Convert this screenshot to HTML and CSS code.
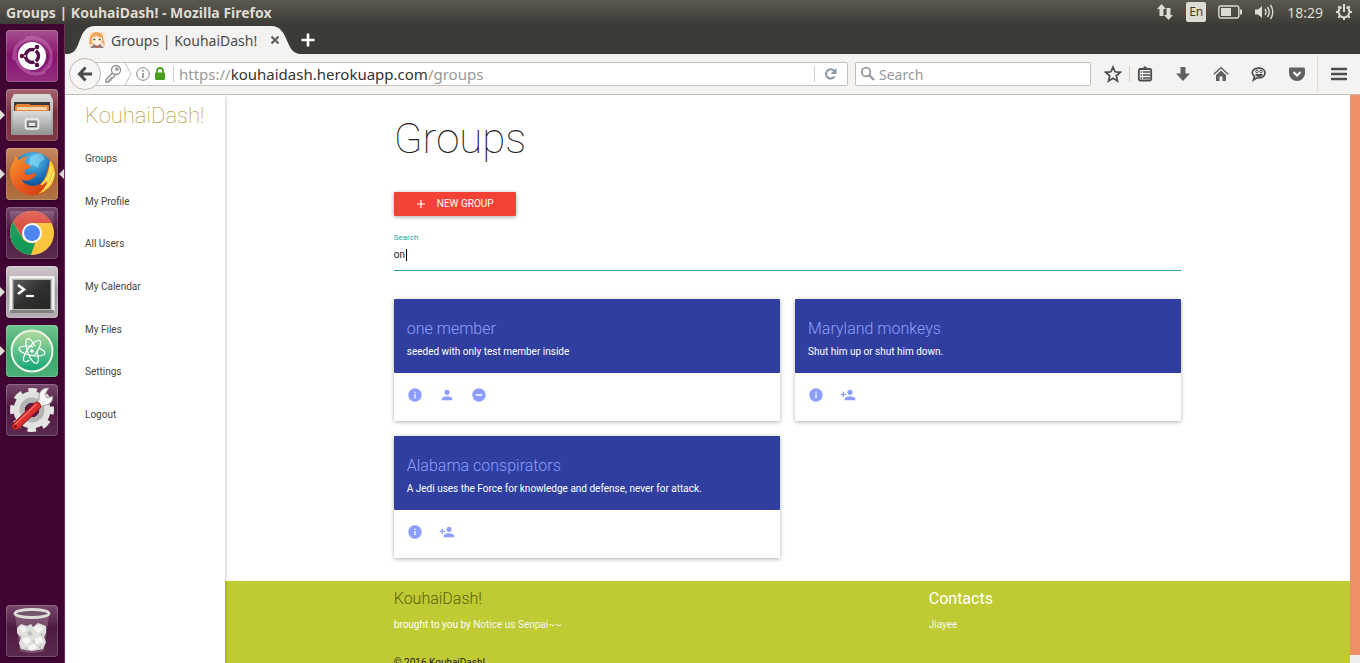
FILE: index.html
```html
<!DOCTYPE html>
<html lang="en">
<head>
<meta charset="utf-8">
<title>Groups | KouhaiDash!</title>
<link rel="stylesheet" href="styles.css">
</head>
<body>
<svg class="defs" aria-hidden="true">
  <defs>
    <linearGradient id="gloss" x1="0" y1="0" x2="0" y2="1"><stop offset="0" stop-color="#fff" stop-opacity=".3"/><stop offset=".55" stop-color="#fff" stop-opacity=".05"/><stop offset="1" stop-color="#fff" stop-opacity=".1"/></linearGradient>
    <linearGradient id="steel" x1="0" y1="0" x2="0" y2="1"><stop offset="0" stop-color="#dcdcda"/><stop offset="1" stop-color="#929290"/></linearGradient>
    <radialGradient id="globe" cx=".5" cy=".2" r=".8"><stop offset="0" stop-color="#5cc6ee"/><stop offset=".6" stop-color="#1667ad"/><stop offset="1" stop-color="#0d2c66"/></radialGradient>
    <linearGradient id="fox" x1="0" y1="0" x2="1" y2="1"><stop offset="0" stop-color="#f79a2c"/><stop offset=".5" stop-color="#e9581e"/><stop offset="1" stop-color="#c6340f"/></linearGradient>
    <linearGradient id="screen" x1="0" y1="0" x2="1" y2="1"><stop offset="0" stop-color="#5a5a58"/><stop offset=".5" stop-color="#30302e"/><stop offset="1" stop-color="#262624"/></linearGradient>
    <linearGradient id="mint" x1="0" y1="0" x2="0" y2="1"><stop offset="0" stop-color="#b4dc9c"/><stop offset="1" stop-color="#0ea678"/></linearGradient>
  </defs>
  <symbol id="info" viewBox="0 0 24 24"><path d="M12 2C6.480 2 2 6.480 2 12s4.480 10 10 10 10-4.480 10-10S17.520 2 12 2zm1 15h-2v-6h2v6zm0-8h-2V7h2v2z"/></symbol>
  <symbol id="person" viewBox="0 0 24 24"><path d="M12 12c2.210 0 4-1.790 4-4s-1.790-4-4-4-4 1.790-4 4 1.790 4 4 4zm0 2c-2.670 0-8 1.340-8 4v2h16v-2c0-2.660-5.330-4-8-4z"/></symbol>
  <symbol id="remove" viewBox="0 0 24 24"><path d="M12 2C6.480 2 2 6.480 2 12s4.480 10 10 10 10-4.480 10-10S17.520 2 12 2zm5 11H7v-2h10v2z"/></symbol>
  <symbol id="person-add" viewBox="0 0 24 24"><path d="M15 12c2.210 0 4-1.790 4-4s-1.790-4-4-4-4 1.790-4 4 1.790 4 4 4zm-9-2V7H4v3H1v2h3v3h2v-3h3v-2H6zm9 4c-2.670 0-8 1.340-8 4v2h16v-2c0-2.660-5.330-4-8-4z"/></symbol>
</svg>

<header class="panel">
  <span class="panel-title">Groups | KouhaiDash! - Mozilla Firefox</span>
  <div class="indicators">
    <svg width="18" height="18" viewBox="0 0 18 18" fill="#dfdbd2"><path d="M5.500 1L10 6H7.500v7h-4V6H1zM12.500 17L8 12h2.500V5h4v7H17z"/></svg>
    <span class="lang">En</span>
    <svg width="24" height="14" viewBox="0 0 24 14"><rect x=".8" y="1" width="20" height="12" rx="2" fill="none" stroke="#dfdbd2" stroke-width="1.400"/><path d="M3 3h10v8H3zM22 4.500h2v5h-2z" fill="#dfdbd2"/></svg>
    <svg width="21" height="16" viewBox="0 0 21 16"><path d="M1 5.500h3L8 2v12l-4-3.500H1z" fill="#dfdbd2"/><path d="M11 5q2 3 0 6M13.500 3q3.500 5 0 10M16.500 1q4.500 7 0 14" fill="none" stroke="#dfdbd2" stroke-width="1.400"/></svg>
    <span class="clock">18:29</span>
    <svg width="18" height="18" viewBox="0 0 18 18" fill="none" stroke="#dfdbd2" stroke-width="2"><path d="M6.500 4a5.500 5.500 0 1 0 5 0M9 1v8"/><path d="M1 9h2.500M14.500 9H17M3.300 3.300L5 5M14.700 3.300L13 5M3.300 14.700L5 13M14.700 14.700L13 13M9 14.500V17"/></svg>
  </div>
</header>

<div class="desktop">
  <nav class="launcher" aria-label="Launcher">
    <button class="tile dash" aria-label="Dash"><svg viewBox="0 0 52 52"><path d="M8 30C6 12 24 3 39 13c10 8 7 22-2 28M10 16c-4 18 11 33 29 26M20 8c18-5 32 14 22 30" fill="none" stroke="#d68aca" stroke-width="3" opacity=".4"/><circle cx="26" cy="26" r="14" fill="#fff"/><circle cx="26" cy="26" r="6.500" fill="none" stroke="#561047" stroke-width="3.500"/><path d="M15 26h5M31 18l-3 4M31 34l-3-4" stroke="#fff" stroke-width="1.500"/><g fill="#561047"><circle cx="16" cy="26" r="2.300"/><circle cx="31" cy="17" r="2.300"/><circle cx="31" cy="35" r="2.300"/></g></svg></button>
    <button class="tile files running" aria-label="Files"><svg viewBox="0 0 52 52"><path d="M8 5h36l3 6v35H5V11z" fill="url(#steel)"/><path d="M8 13h36v13H8z" fill="#3c3734"/><path d="M9 17l2-2h12l2 1h18v6H9z" fill="#e7833a"/><path d="M11 18h30v3H11z" fill="#f8d6ac"/><path d="M7 22h38v24H7z" fill="url(#steel)"/><rect x="19.500" y="30" width="13" height="10" rx="2" fill="#b5b5b3" stroke="#f4f4f4" stroke-width="1.500"/><rect x="22" y="33" width="8" height="4.500" fill="#e4e4e4" stroke="#444"/></svg></button>
    <button class="tile firefox running active" aria-label="Firefox"><svg viewBox="0 0 52 52"><circle cx="27" cy="25" r="21" fill="url(#globe)"/><path d="M24 9q6-5 12-3l3 5-5 3-2 6-5-3-4 1z" fill="#8fdcf6" opacity=".55"/><path d="M44 12q7 9 4 19C45 43 33 49 22 47 10 44 4 35 4 25q0-7 4-12l1-5 4 4q5-4 9-3-4 2-3 6l6 3q-2 3-6 4-1 3 2 5l9-2q0 5-6 7-5 2-9-1 4 7 12 7 9-1 12-8 3-8 5-18z" fill="url(#fox)"/><path d="M44 12q7 9 4 19-3 11-16 15 9-7 9-13-4 4-7 4 9-9 10-25z" fill="#f9cf35"/><path d="M45 18q0 12-9 19M48 24q-2 11-10 17" stroke="#fff3a0" fill="none"/></svg></button>
    <button class="tile glass" aria-label="Chrome"><svg viewBox="0 0 52 52"><circle cx="26" cy="26" r="22" fill="#f9c63e"/><path d="M7 15A22 22 0 0 1 46 16H26L17 31z" fill="#dc4a3e"/><path d="M7 15l10 17q4 5 12 4l-4 12A22 22 0 0 1 7 15z" fill="#149959"/><circle cx="26" cy="26" r="10" fill="#fff"/><circle cx="26" cy="26" r="8" fill="#4b86f0"/><path d="M4 4h44v14Q25 21 4 32z" fill="url(#gloss)" opacity=".6"/></svg></button>
    <button class="tile terminal running" aria-label="Terminal"><svg viewBox="0 0 52 52"><rect x="3.500" y="10" width="45" height="37" rx="1" fill="#f3f3f1"/><rect x="4" y="44" width="44" height="3" fill="#82827f"/><rect x="6" y="12.500" width="40" height="31.500" fill="#b9b9b7"/><rect x="7.500" y="14" width="37" height="29" fill="url(#screen)"/><path d="M12 19l6 4.500-6 4.500" fill="none" stroke="#fff" stroke-width="2.600"/><path d="M20 30h8" stroke="#fff" stroke-width="2.200"/></svg></button>
    <button class="tile atom running" aria-label="Atom"><svg viewBox="0 0 52 52" fill="none"><circle cx="26" cy="26" r="20.500" fill="url(#mint)" stroke="#f0f4e8" stroke-width="2"/><g stroke="#fff" stroke-width="1.200"><ellipse cx="26" cy="26" rx="13" ry="4.500" transform="rotate(10 26 26)" stroke-dasharray="44 6"/><ellipse cx="26" cy="26" rx="13" ry="4.500" transform="rotate(70 26 26)" stroke-dasharray="40 6"/><ellipse cx="26" cy="26" rx="13" ry="4.500" transform="rotate(127 26 26)" stroke-dasharray="46 6"/></g><circle cx="26" cy="26" r="1.800" fill="#fff"/></svg></button>
    <button class="tile glass" aria-label="System Settings"><svg viewBox="0 0 52 52"><circle cx="26" cy="26" r="19.500" fill="none" stroke="#e6e6e4" stroke-width="5" stroke-dasharray="8.500 6.820" stroke-dashoffset="4.250"/><circle cx="26" cy="26" r="13" fill="none" stroke="#e2e2e0" stroke-width="11"/><circle cx="26" cy="26" r="10" fill="none" stroke="#b4b4b2" stroke-width="5"/><path d="M30 20l3-5q-1-8 6-11l4 0-4 6 2 4 6-2q0 8-7 9l-4 1-3 3z" fill="#f4f4f2" stroke="#888" stroke-width=".8"/><path d="M31 22L10 42" stroke="#9d1616" stroke-width="8" stroke-linecap="round"/><path d="M31 22L10 42" stroke="#dd302c" stroke-width="6.500" stroke-linecap="round"/><path d="M30 20.500L9.500 40" stroke="#f2706a" stroke-width="1.500" stroke-linecap="round"/><circle cx="9.500" cy="42.500" r="1.500" fill="#5f1010"/></svg></button>
    <button class="tile glass trash" aria-label="Trash"><svg viewBox="0 0 52 52"><path d="M9 10l5 36q12 4 24 0l5-36z" fill="#9a7990" opacity=".5"/><path d="M11 23l4-4 6 2 4-2 2 3 5-4 8 3 0 7-2 4 2 5-3 7-11 2-11-2-2-6 2-5-4-5z" fill="#dfe0dd"/><g fill="#f6f6f4"><path d="M13 22l5-1 3 4-4 3zM27 23l6-3 5 4-6 4zM16 34l6-2 3 4-5 4zM29 33l6-1 2 5-7 2zM22 41l6-2 3 4-7 2z"/></g><g fill="#bcbfba"><path d="M21 27l4-1 2 4-4 1zM13 29l3 2-1 3zM34 29l4-1-2 4zM25 36l3-1 1 3zM18 42l3 1 0 3zM32 42l3-2 0 4z"/></g><ellipse cx="26" cy="8.500" rx="17" ry="4" fill="#73566b" stroke="#deded9" stroke-width="2.800"/></svg></button>
  </nav>

  <div class="browser">
    <div class="tabstrip">
      <div class="tab">
        <svg class="tab-shape" width="234" height="28" viewBox="0 0 234 28"><path d="M0 28C16 28 9 0 28 0H204C223 0 217 28 234 28z" fill="#f4f3f2"/></svg>
        <svg class="favicon" width="16" height="16" viewBox="0 0 16 16"><path d="M0 0h16v16H0z" fill="#fbe8d0"/><path d="M0 12L1 5q1-4 6-5 7 0 7 6l2 7-3-2-9 1z" fill="#f0a65c"/><path d="M3 6l4-2 6 2v4l-5 4-5-4z" fill="#fff1df"/><path d="M4 7.500h2.500M9.500 7.500H12" stroke="#687048" stroke-width="1.500"/><path d="M1 16l4-4 3 2 3-2 4 4z" fill="#8f8085"/><path d="M5 13l3 3 3-3-3 1z" fill="#d4563e"/></svg>
        <span class="tab-title">Groups | KouhaiDash!</span>
        <button class="icon-btn" aria-label="Close tab"><svg width="10" height="10" viewBox="0 0 10 10" stroke="#62615e" stroke-width="2.200"><path d="M1.500 1.500l7 7M8.500 1.500l-7 7"/></svg></button>
      </div>
      <button class="icon-btn" aria-label="New tab"><svg width="14" height="14" viewBox="0 0 14 14" stroke="#fff" stroke-width="2.600"><path d="M7 .5v13M.5 7h13"/></svg></button>
    </div>

    <div class="toolbar">
      <button class="back" aria-label="Back"><svg width="16" height="16" viewBox="0 0 16 16" fill="none" stroke="#4c4c4c" stroke-width="3"><path d="M8.500 1.500L2.500 8l6 6.500M3 8h12"/></svg></button>
      <div class="urlbar">
        <svg width="28" height="22" viewBox="0 0 28 22" fill="none" stroke="#8b8b8b" stroke-width="1.300"><circle cx="12" cy="7" r="4.500"/><circle cx="13" cy="6" r="1.200"/><path d="M8.500 10L2 16.500V19h3v-2h2v-2h2l2-3"/><path d="M21 0l6 11-6 11" stroke="#c3c0bc" stroke-width="1"/></svg>
        <svg width="14" height="14" viewBox="0 0 14 14" fill="none" stroke="#858585"><circle cx="7" cy="7" r="6.300"/><path d="M7 6v5M7 3v1.700" stroke-width="1.500"/></svg>
        <svg class="lock" width="12" height="14" viewBox="0 0 12 14"><rect x="1" y="5.500" width="10" height="7.500" rx="1" fill="#47a01e"/><path d="M3 6V4q0-3 3-3t3 3v2" fill="none" stroke="#47a01e" stroke-width="1.800"/></svg>
        <div class="url" role="textbox" aria-label="Address" contenteditable="true" spellcheck="false">https://<span class="host">kouhaidash.herokuapp.com</span>/groups</div>
        <button class="reload" aria-label="Reload"><svg width="14" height="14" viewBox="0 0 14 14"><path d="M10.500 9.500A4.600 4.600 0 1 1 10 3.800" fill="none" stroke="#8796a5" stroke-width="2"/><path d="M12.500 1v6h-6z" fill="#8796a5"/></svg></button>
      </div>
      <label class="websearch">
        <svg width="16" height="16" viewBox="0 0 16 16" fill="none" stroke="#999"><circle cx="6" cy="6" r="4.300" stroke-width="1.800"/><path d="M9 9l5 5" stroke-width="2.400"/></svg>
        <input type="text" placeholder="Search" aria-label="Web search">
      </label>
      <div class="tools">
        <button class="icon-btn star" aria-label="Bookmark"><svg width="18" height="18" viewBox="0 0 18 18"><path d="M9 2l2.100 4.800 5.200.5-4 3.500 1.200 5.200L9 13.300 4.500 16l1.200-5.200-4-3.500 5.200-.5z" fill="none" stroke="#4c4c4c" stroke-width="1.700"/></svg></button>
        <button class="icon-btn" aria-label="Bookmarks menu"><svg width="16" height="16" viewBox="0 0 16 16"><path d="M5 3l3-3 3 3z" fill="#4c4c4c"/><rect x="1.800" y="3" width="12.400" height="11.500" rx="1.500" fill="none" stroke="#4c4c4c" stroke-width="1.800"/><path d="M3.500 6H5M6 6h7M3.500 9H5M6 9h7M3.500 12H5M6 12h7" stroke="#4c4c4c" stroke-width="1.300"/></svg></button>
        <button class="icon-btn" aria-label="Downloads"><svg width="16" height="16" viewBox="0 0 16 16"><path d="M5.500 1h5v6.500H15L8 15 1 7.500h4.500z" fill="#616161"/></svg></button>
        <button class="icon-btn" aria-label="Home"><svg width="16" height="16" viewBox="0 0 16 16" fill="#616161"><path d="M8 4.500l5 4.500v6H9.500v-4.500h-3V15H3V9z"/><path d="M.8 8.300L8 1.800l7.200 6.500" fill="none" stroke="#616161" stroke-width="1.500"/></svg></button>
        <button class="icon-btn" aria-label="Chat"><svg width="16" height="16" viewBox="0 0 16 16"><path d="M8 2.200c8 0 8 9.800 0 9.800H5.500L2.500 14l1-3.500C-1 6.500 2 2.200 8 2.200z" fill="#f4f3f2" stroke="#4c4c4c" stroke-width="1.700"/><path d="M4 8h8q-1 3-4 3T4 8z" fill="#4c4c4c"/><circle cx="6" cy="5.500" r="1.300" fill="none" stroke="#4c4c4c"/><circle cx="10" cy="5.500" r="1.300" fill="none" stroke="#4c4c4c"/></svg></button>
        <button class="icon-btn" aria-label="Pocket"><svg width="16" height="16" viewBox="0 0 16 16"><path d="M1.500 1.500h13q1.500 0 1.500 1V7a8 8 0 0 1-16 0V2.500q0-1 1.500-1z" fill="#616161"/><path d="M4.500 6L8 9.500 11.500 6" fill="none" stroke="#fff" stroke-width="2"/></svg></button>
        <button class="icon-btn menu" aria-label="Menu"><svg width="16" height="14" viewBox="0 0 16 14"><path d="M1 2h14M1 7h14M1 12h14" stroke="#4c4c4c" stroke-width="2.600" stroke-linecap="round"/></svg></button>
      </div>
    </div>

    <div class="page">
      <aside class="sidenav">
        <a class="brand" href="#">KouhaiDash!</a>
        <ul class="nav-list">
          <li><a href="#">Groups</a></li>
          <li><a href="#">My Profile</a></li>
          <li><a href="#">All Users</a></li>
          <li><a href="#">My Calendar</a></li>
          <li><a href="#">My Files</a></li>
          <li><a href="#">Settings</a></li>
          <li><a href="#">Logout</a></li>
        </ul>
      </aside>
      <div class="content">
        <main class="container">
          <h1>Groups</h1>
          <button class="new-group"><svg width="12" height="12" viewBox="0 0 24 24" fill="#fff"><path d="M20 13.200h-6.800V20h-2.400v-6.800H4v-2.400h6.800V4h2.400v6.800H20z"/></svg>NEW GROUP</button>
          <div class="field">
            <label for="group-search">Search</label>
            <input id="group-search" type="text" value="on">
          </div>
          <div class="cards">
            <article class="card">
              <div class="card-head"><h2>one member</h2><p>seeded with only test member inside</p></div>
              <div class="card-actions">
                <a href="#" aria-label="Info"><svg><use href="#info"/></svg></a>
                <a href="#" aria-label="Members"><svg><use href="#person"/></svg></a>
                <a href="#" aria-label="Leave"><svg><use href="#remove"/></svg></a>
              </div>
            </article>
            <article class="card">
              <div class="card-head"><h2>Maryland monkeys</h2><p>Shut him up or shut him down.</p></div>
              <div class="card-actions">
                <a href="#" aria-label="Info"><svg><use href="#info"/></svg></a>
                <a href="#" aria-label="Join"><svg><use href="#person-add"/></svg></a>
              </div>
            </article>
            <article class="card">
              <div class="card-head"><h2>Alabama conspirators</h2><p>A Jedi uses the Force for knowledge and defense, never for attack.</p></div>
              <div class="card-actions">
                <a href="#" aria-label="Info"><svg><use href="#info"/></svg></a>
                <a href="#" aria-label="Join"><svg><use href="#person-add"/></svg></a>
              </div>
            </article>
          </div>
        </main>
        <footer class="footer">
          <div class="container footer-grid">
            <div class="about"><h3 class="thin">KouhaiDash!</h3><p>brought to you by <a href="#">Notice us Senpai~~</a></p></div>
            <div class="contacts"><h3>Contacts</h3><a href="#">Jiayee</a></div>
          </div>
          <p class="container copyright">© 2016 KouhaiDash!</p>
        </footer>
      </div>
      <div class="scrollbar"></div>
    </div>
  </div>
</div>
</body>
</html>
```

FILE: styles.css
```css
* { box-sizing: border-box; }
body {
  margin: 0;
  height: 100vh;
  display: flex;
  flex-direction: column;
  overflow: hidden;
  font-family: Roboto, "Liberation Sans", sans-serif;
  font-size: 10px;
  line-height: 15px;
  color: #212121;
}
h1, h2, h3, p, ul { margin: 0; padding: 0; }
ul { list-style: none; }
a { color: inherit; text-decoration: none; }
button { border: 0; padding: 0; background: none; font: inherit; color: inherit; }
svg { display: block; flex: none; }
.defs { position: absolute; width: 0; height: 0; }

/* Top panel */
.panel {
  flex: none;
  height: 24px;
  display: flex;
  align-items: center;
  justify-content: space-between;
  padding: 0 7px 0 6px;
  background: linear-gradient(#5b584e, #3d3c37);
  color: #dfdbd2;
  font-family: "Noto Sans", "Open Sans", sans-serif;
  font-size: 14px;
}
.panel-title { font-weight: 700; }
.indicators { display: flex; align-items: center; gap: 12px; }
.lang {
  width: 20px;
  height: 20px;
  border-radius: 2px;
  background: #dfdbd2;
  color: #3d3c37;
  font-size: 12px;
  line-height: 20px;
  text-align: center;
}

.desktop { flex: 1; min-height: 0; display: flex; }

/* Launcher */
.launcher {
  flex: none;
  width: 65px;
  padding: 6px;
  display: flex;
  flex-direction: column;
  gap: 7px;
  background: #410534;
  border-right: 1px solid #742f68;
}
.tile {
  position: relative;
  flex: none;
  width: 52px;
  height: 52px;
  border-radius: 4px;
  box-shadow: inset 0 0 0 1px rgba(255, 255, 255, .18), 0 1px 3px rgba(0, 0, 0, .4);
}
.tile svg { width: 52px; height: 52px; }
.dash { background: linear-gradient(#a5508f, #87146f 50%, #922f80); }
.files { background: linear-gradient(#a86670, #782e3c 45%, #7f3945); }
.firefox { background: linear-gradient(#c98b64, #a66135 50%, #b27344); }
.terminal { background: linear-gradient(#d0c9ce, #a69da5 50%, #b7aeb5); }
.atom { background: linear-gradient(#72c691, #37a768 50%, #4bb078); }
.glass { background: linear-gradient(#78496c, #501841 45%, #5b2a4f); }
.trash { margin-top: auto; }
.running::before, .active::after {
  content: "";
  position: absolute;
  top: 21px;
  left: -6px;
  border: 5px solid transparent;
  border-left-color: #dedbd8;
  border-right-width: 0;
}
.active::after {
  left: auto;
  right: -6px;
  border-width: 5px 5px 5px 0;
  border-right-color: #dedbd8;
}

/* Browser chrome */
.browser {
  flex: 1;
  min-width: 0;
  display: flex;
  flex-direction: column;
  font-family: "Noto Sans", "Open Sans", sans-serif;
  font-size: 14px;
}
.icon-btn { display: flex; align-items: center; justify-content: center; }
.tabstrip {
  flex: none;
  height: 30px;
  display: flex;
  align-items: center;
  padding: 2px 0 0 2px;
  background: #3c3b37;
}
.tab {
  position: relative;
  width: 234px;
  height: 28px;
  display: flex;
  align-items: center;
  gap: 6px;
  padding: 0 21px 0 22px;
  color: #4a4a4a;
}
.tab > * { position: relative; }
.tab > .tab-shape { position: absolute; left: 0; top: 0; }
.tab-title { flex: 1; white-space: nowrap; }
.toolbar {
  flex: none;
  height: 41px;
  display: flex;
  align-items: center;
  padding: 0 7px 0 4px;
  background: #f4f3f2;
  border-bottom: 1px solid #c2bfba;
}
.back {
  z-index: 1;
  width: 32px;
  height: 32px;
  display: flex;
  align-items: center;
  justify-content: center;
  border: 1px solid #bdb9b5;
  border-radius: 50%;
  background: #f7f6f5;
}
.urlbar, .websearch {
  height: 24px;
  display: flex;
  align-items: center;
  background: #fff;
  border: 1px solid #c4c0bb;
  border-radius: 2px;
}
.urlbar { flex: 1; margin-left: -16px; padding-left: 18px; gap: 4px; }
.url {
  flex: 1;
  height: 16px;
  margin-left: 3px;
  padding-left: 5px;
  border-left: 1px solid #d3d0cd;
  color: #999;
  white-space: nowrap;
  font-size: 15px;
  line-height: 16px;
}
.host { color: #333; }
.reload {
  height: 16px;
  width: 33px;
  display: flex;
  align-items: center;
  justify-content: center;
  border-left: 1px solid #d3d0cd;
}
.websearch { width: 236px; margin-left: 7px; padding-left: 4px; gap: 3px; }
.websearch input {
  flex: 1;
  min-width: 0;
  border: 0;
  padding: 0;
  outline: 0;
  background: none;
  font: inherit;
}
.websearch input::placeholder { color: #999; }
.tools { display: flex; align-items: center; margin-left: 13px; }
.tools .icon-btn { width: 38px; height: 16px; }
.tools .star { width: 26px; padding-right: 8px; border-right: 1px solid #d3d0cd; margin-right: -4px; }
.tools .menu { height: 36px; width: 36px; padding-left: 7px; margin-left: 1px; border-left: 1px solid #dedbd8; }

/* Page */
.page {
  flex: 1;
  min-height: 0;
  display: flex;
  overflow: hidden;
  background: #fff;
  font-family: Roboto, "Liberation Sans", sans-serif;
  font-size: 10px;
}
.sidenav {
  flex: none;
  z-index: 1;
  width: 160px;
  box-shadow: 0 1px 4px rgba(0, 0, 0, .3);
}
.brand {
  display: block;
  padding: 0 20px;
  font-size: 22px;
  font-weight: 100;
  line-height: 42px;
  color: #a98b18;
}
.nav-list { display: grid; grid-auto-rows: 1fr; height: 299px; color: #444; }
.nav-list a { display: flex; align-items: center; height: 100%; padding: 0 20px; }
.content { flex: 1; min-width: 0; }
.container { width: 70%; margin: 0 auto; }
.container h1 {
  padding: 19px 0 29px;
  font-size: 42px;
  font-weight: 100;
  line-height: 49px;
}
.new-group {
  display: flex;
  align-items: center;
  gap: 10px;
  height: 24px;
  padding: 0 22px 1px 21px;
  border-radius: 1px;
  background: #f44336;
  color: #fff;
  box-shadow: 0 1px 4px rgba(0, 0, 0, .35);
}
.field { position: relative; margin-top: 17px; }
.field label { display: block; font-size: 8px; line-height: 10px; color: #26a69a; }
.field input {
  display: block;
  width: 100%;
  height: 28px;
  padding: 0 0 5px;
  border: 0;
  border-bottom: 1px solid #26a69a;
  outline: 0;
  font: inherit;
  color: #212121;
}
.field::after {
  content: "";
  position: absolute;
  left: 12px;
  top: 16px;
  width: 1px;
  height: 12px;
  background: #000;
}
.cards { display: grid; grid-template-columns: 1fr 1fr; gap: 15px; margin-top: 28px; }
.card { border-radius: 1px; background: #fff; box-shadow: 0 1px 4px rgba(0, 0, 0, .32); }
.card-head { height: 74px; padding: 19px 13px 0; border-radius: 1px; background: #303f9f; color: #fff; }
.card-head h2 { font-size: 16px; font-weight: 300; line-height: 21px; margin-bottom: 5px; color: #8c9eff; }
.card-actions { display: flex; gap: 16px; padding: 14px 13px 18px; }
.card-actions svg { width: 16px; height: 16px; fill: #8c9eff; }

.footer { margin-top: 23px; padding: 8px 0 24px; background: #c0ca33; color: #fff; }
.footer-grid { display: grid; grid-template-columns: repeat(12, 1fr); column-gap: 15px; }
.about { grid-column: 1 / span 6; }
.contacts { grid-column: 9 / span 4; }
.footer h3 { font-size: 16px; font-weight: 400; line-height: 19px; margin-bottom: 9px; }
.footer .thin { font-weight: 300; color: #5b6010; }
.footer a { color: #f5f5f5; }
.footer .copyright { margin-top: 23px; color: #212121; }
.scrollbar { flex: none; width: 10px; background: linear-gradient(#f08e67, #f08e67) no-repeat 0 0 / 100% calc(100% - 8px) #eeedeb; }
```
